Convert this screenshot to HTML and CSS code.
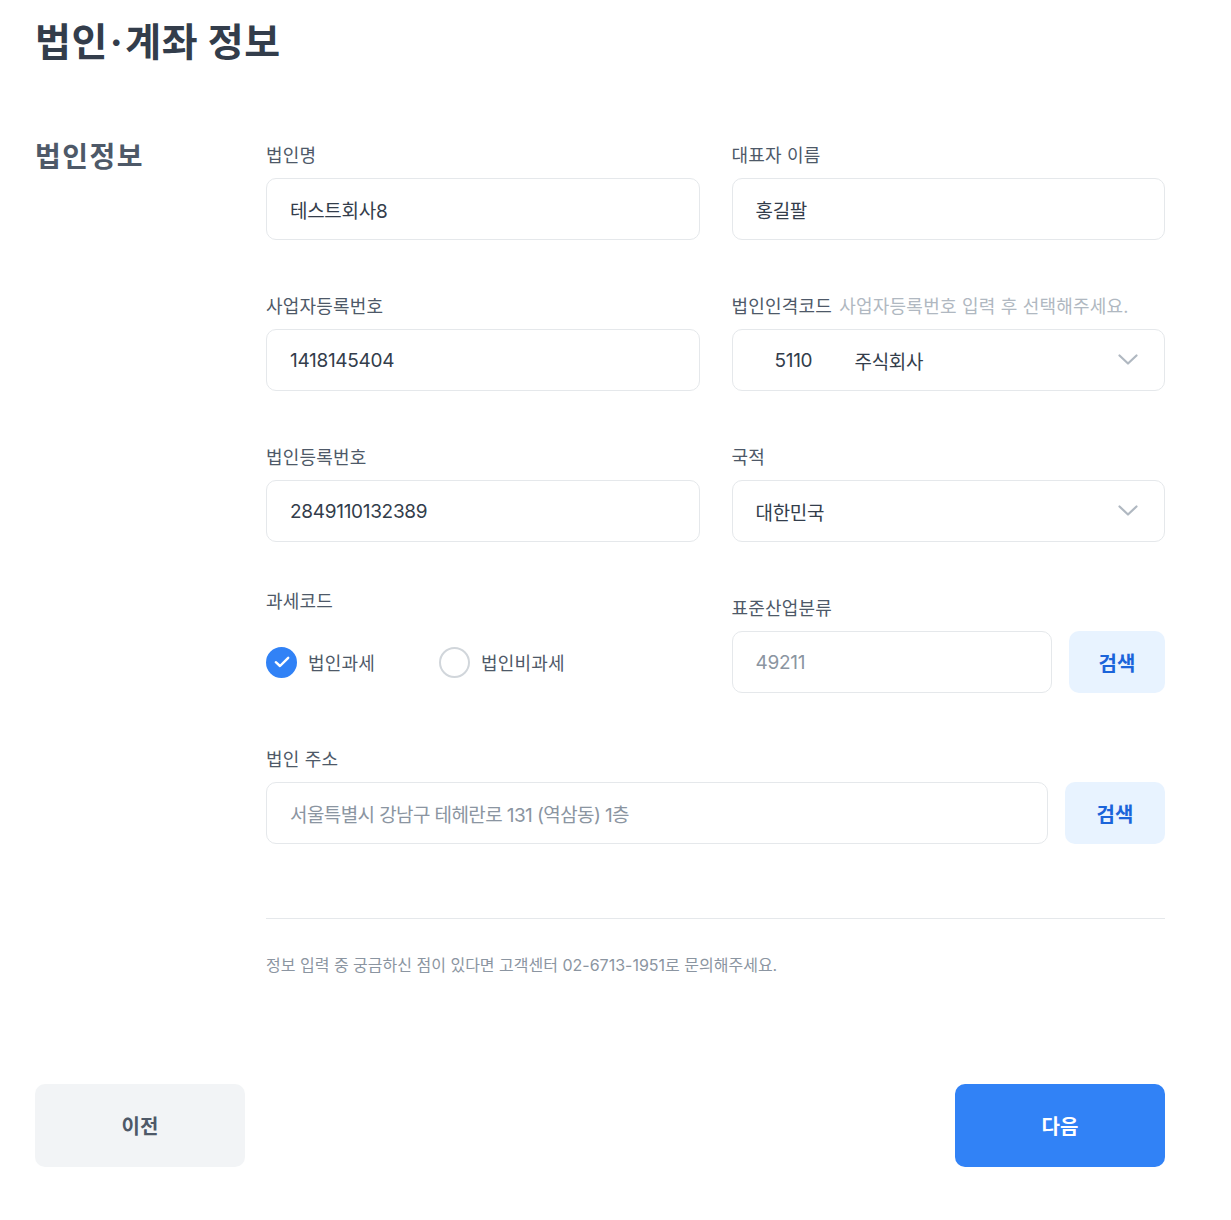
FILE: index.html
```html
<!DOCTYPE html>
<html lang="ko">
<head>
<meta charset="utf-8">
<title>법인·계좌 정보</title>
<link rel="stylesheet" href="styles.css">
</head>
<body>
<div class="page">
  <h1 class="title">법인<span class="dot">·</span>계좌 정보</h1>

  <section class="section">
    <h2 class="section-title">법인정보</h2>
    <div class="form">
      <div class="grid">
        <div class="field">
          <div class="label">법인명</div>
          <div class="input">테스트회사8</div>
        </div>
        <div class="field">
          <div class="label">대표자 이름</div>
          <div class="input">홍길팔</div>
        </div>

        <div class="field">
          <div class="label">사업자등록번호</div>
          <div class="input">1418145404</div>
        </div>
        <div class="field">
          <div class="label">법인인격코드 <span class="hint">사업자등록번호 입력 후 선택해주세요.</span></div>
          <div class="input select">
            <span class="code">5110</span><span class="sel-text">주식회사</span>
            <svg class="chev" width="20" height="12" viewBox="0 0 20 12"><path d="M1.5 1.5 L10 9.5 L18.5 1.5" fill="none" stroke="#b0b8c1" stroke-width="2.2" stroke-linecap="round" stroke-linejoin="round"/></svg>
          </div>
        </div>

        <div class="field">
          <div class="label">법인등록번호</div>
          <div class="input">2849110132389</div>
        </div>
        <div class="field">
          <div class="label">국적</div>
          <div class="input select">
            <span class="sel-text">대한민국</span>
            <svg class="chev" width="20" height="12" viewBox="0 0 20 12"><path d="M1.5 1.5 L10 9.5 L18.5 1.5" fill="none" stroke="#b0b8c1" stroke-width="2.2" stroke-linecap="round" stroke-linejoin="round"/></svg>
          </div>
        </div>

        <div class="field">
          <div class="label label-raised">과세코드</div>
          <div class="radios">
            <label class="radio">
              <span class="radio-dot checked">
                <svg width="16" height="12" viewBox="0 0 16 12"><path d="M1.8 6.2 L6 10 L14.2 1.8" fill="none" stroke="#fff" stroke-width="2.4" stroke-linecap="round" stroke-linejoin="round"/></svg>
              </span>
              <span class="radio-text">법인과세</span>
            </label>
            <label class="radio">
              <span class="radio-dot"></span>
              <span class="radio-text">법인비과세</span>
            </label>
          </div>
        </div>
        <div class="field">
          <div class="label">표준산업분류</div>
          <div class="input-row">
            <div class="input muted grow">49211</div>
            <button class="search">검색</button>
          </div>
        </div>

        <div class="field wide">
          <div class="label">법인 주소</div>
          <div class="input-row">
            <div class="input muted grow addr">서울특별시 강남구 테헤란로 131 (역삼동) 1층</div>
            <button class="search search-wide">검색</button>
          </div>
        </div>
      </div>

      <hr class="divider">
      <p class="notice">정보 입력 중 궁금하신 점이 있다면 고객센터 02-6713-1951로 문의해주세요.</p>
    </div>
  </section>

  <div class="actions">
    <button class="btn btn-prev">이전</button>
    <button class="btn btn-next">다음</button>
  </div>
</div>
</body>
</html>
```

FILE: styles.css
```css
* { box-sizing: border-box; }

body {
  margin: 0;
  background: #fff;
  font-family: Inter, "Noto Sans CJK KR", "Noto Sans", sans-serif;
  color: #333d4b;
}

.page {
  padding: 18px 66px 0 35px;
}

.title {
  margin: 0;
  font-size: 39px;
  line-height: 48px;
  font-weight: 700;
  color: #333d4b;
  letter-spacing: 0.5px;
}

.title .dot { margin: 0 2px; }

.section {
  display: grid;
  grid-template-columns: 231px 1fr;
  margin-top: 75px;
}

.section-title {
  margin: -2px 0 0;
  font-size: 28px;
  line-height: 36px;
  font-weight: 700;
  color: #4e5968;
  letter-spacing: 1.5px;
}

.grid {
  display: grid;
  grid-template-columns: 1fr 1fr;
  column-gap: 32px;
  row-gap: 52px;
}

.field.wide { grid-column: 1 / -1; }

.label {
  font-size: 18px;
  line-height: 26px;
  padding-top: 2px;
  color: #4e5968;
  letter-spacing: 0.2px;
  margin-bottom: 9px;
  white-space: nowrap;
}

.label-raised {
  margin-top: -7px;
  margin-bottom: 16px;
}

.hint {
  color: #b0b8c1;
  margin-left: 2px;
}

.input {
  height: 62px;
  border: 1px solid #e5e8eb;
  border-radius: 10px;
  display: flex;
  align-items: center;
  padding: 0 23px;
  font-size: 19px;
  letter-spacing: -0.3px;
  color: #333d4b;
  background: #fff;
}

.input.muted { color: #8b95a1; }
.input.addr { letter-spacing: -0.6px; }

.select { padding-right: 26px; }
.select .code { width: 99px; padding-left: 19px; }
.select .sel-text { flex: 1; }
.chev { display: block; flex: none; }

.input-row {
  display: flex;
  gap: 17px;
}
.grow { flex: 1; }

.search {
  flex: none;
  width: 96px;
  height: 62px;
  border: none;
  border-radius: 10px;
  background: #e8f3ff;
  color: #1b64da;
  font-family: inherit;
  font-size: 20px;
  font-weight: 700;
  letter-spacing: 0;
  cursor: pointer;
}
.search-wide { width: 100px; }

.radios {
  height: 62px;
  display: flex;
  align-items: center;
  gap: 64px;
}

.radio {
  display: flex;
  align-items: center;
  gap: 11px;
}

.radio-dot {
  width: 31px;
  height: 31px;
  border-radius: 50%;
  border: 2px solid #d1d6db;
  display: flex;
  align-items: center;
  justify-content: center;
  flex: none;
}

.radio-dot.checked {
  background: #3182f6;
  border-color: #3182f6;
}

.radio-text {
  font-size: 18px;
  line-height: 26px;
  padding-top: 3px;
  color: #4e5968;
  letter-spacing: 0.2px;
}

.divider {
  margin: 74px 0 0;
  border: none;
  border-top: 1px solid #e5e8eb;
}

.notice {
  margin: 34px 0 0;
  font-size: 16px;
  line-height: 24px;
  color: #8b95a1;
  letter-spacing: 0;
}

.actions {
  display: flex;
  justify-content: space-between;
  margin-top: 107px;
}

.btn {
  width: 210px;
  height: 83px;
  border: none;
  border-radius: 10px;
  font-family: inherit;
  font-size: 20px;
  font-weight: 700;
  cursor: pointer;
}

.btn-prev {
  background: #f2f4f6;
  color: #4e5968;
}

.btn-next {
  background: #3182f6;
  color: #fff;
}
```
